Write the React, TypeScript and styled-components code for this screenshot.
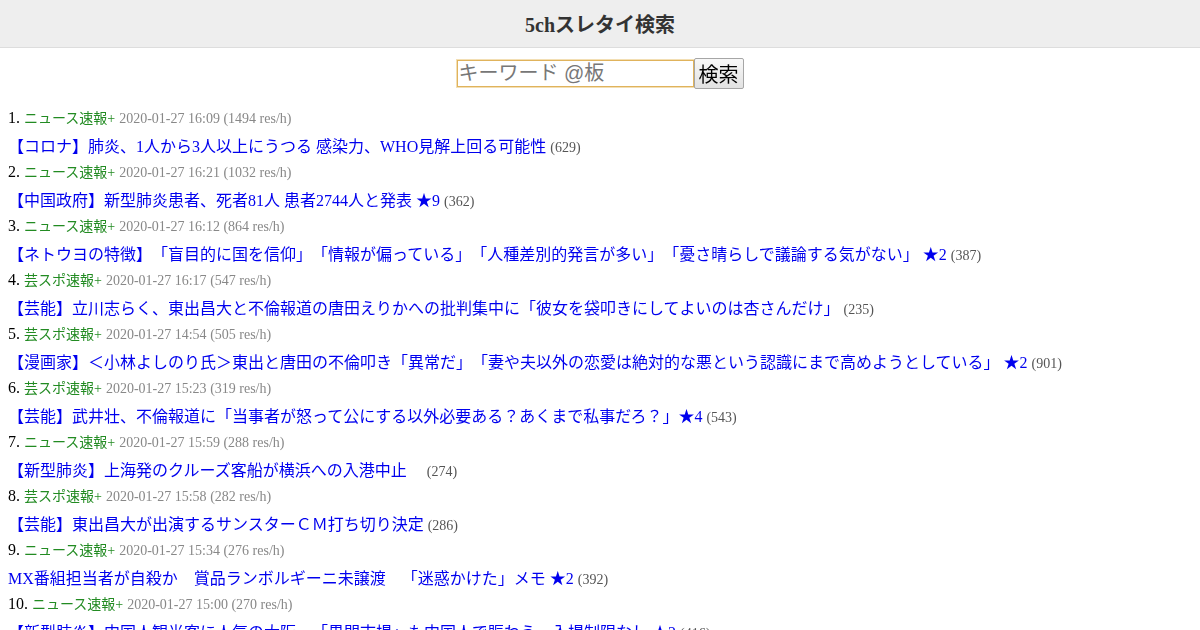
import styled, { createGlobalStyle } from 'styled-components'

const GlobalStyle = createGlobalStyle`
  body {
    margin: 0;
    background: #fff;
    font-family: "Liberation Serif", "Noto Sans CJK JP", serif;
    color: #000;
    text-spacing-trim: space-all;
  }
`

const Header = styled.header`
  height: 47px;
  display: flex;
  align-items: center;
  justify-content: center;

  background-color: #eee;
  border-bottom: 1px solid #ddd;
`

const Title = styled.h1`
  margin: 0;
  font-size: 20px;
  font-weight: bold;
  color: #333;
`

const SearchForm = styled.form`
  display: flex;
  justify-content: center;
  align-items: center;

  padding: 10px 0 15px;
`

const SearchInput = styled.input`
  width: 237px;
  height: 27px;
  box-sizing: border-box;
  padding: 0 1px;

  font-family: "Liberation Sans", "Noto Sans CJK JP", sans-serif;
  font-size: 20px;
  border: 1px solid #e0b35c;
  box-shadow: 0 0 0 1px #f3dfb4;
  outline: none;

  &::placeholder {
    color: #777;
  }
`

const SearchButton = styled.button`
  height: 31px;
  padding: 0 4px;

  font-family: "Liberation Sans", "Noto Sans CJK JP", sans-serif;
  font-size: 20px;
  color: #000;
  background: linear-gradient(#f8f8f8, #e2e2e2);
  border: 1px solid #a6a6a6;
  border-radius: 2px;
`

const List = styled.ol`
  margin: 0;
  padding: 0 8px;
  list-style: none;
`

const Item = styled.li`
  line-height: 27px;
`

const Line = styled.div<{ $offset?: number }>`
  height: ${({ $offset = 0 }) => 27 - $offset}px;
  padding-top: ${({ $offset = 0 }) => $offset}px;
  font-size: 16px;
  white-space: nowrap;

  & > * {
    line-height: 1;
  }
`

const Board = styled.span`
  font-size: 14px;
  color: #228b22;
`

const Info = styled.span`
  font-size: 14px;
  color: #888;
`

const ThreadLink = styled.a`
  font-size: 16px;
  color: #0000ee;
  text-decoration: none;
`

const Count = styled.span`
  font-size: 14px;
  color: #555;
`

type Thread = {
  board: string
  date: string
  speed: number
  title: string
  count: number
}

const threads: Thread[] = [
  { board: 'ニュース速報+', date: '2020-01-27 16:09', speed: 1494, title: '【コロナ】肺炎、1人から3人以上にうつる 感染力、WHO見解上回る可能性', count: 629 },
  { board: 'ニュース速報+', date: '2020-01-27 16:21', speed: 1032, title: '【中国政府】新型肺炎患者、死者81人 患者2744人と発表 ★9', count: 362 },
  { board: 'ニュース速報+', date: '2020-01-27 16:12', speed: 864, title: '【ネトウヨの特徴】「盲目的に国を信仰」「情報が偏っている」「人種差別的発言が多い」「憂さ晴らしで議論する気がない」 ★2', count: 387 },
  { board: '芸スポ速報+', date: '2020-01-27 16:17', speed: 547, title: '【芸能】立川志らく、東出昌大と不倫報道の唐田えりかへの批判集中に「彼女を袋叩きにしてよいのは杏さんだけ」', count: 235 },
  { board: '芸スポ速報+', date: '2020-01-27 14:54', speed: 505, title: '【漫画家】＜小林よしのり氏＞東出と唐田の不倫叩き「異常だ」「妻や夫以外の恋愛は絶対的な悪という認識にまで高めようとしている」 ★2', count: 901 },
  { board: '芸スポ速報+', date: '2020-01-27 15:23', speed: 319, title: '【芸能】武井壮、不倫報道に「当事者が怒って公にする以外必要ある？あくまで私事だろ？」★4', count: 543 },
  { board: 'ニュース速報+', date: '2020-01-27 15:59', speed: 288, title: '【新型肺炎】上海発のクルーズ客船が横浜への入港中止　', count: 274 },
  { board: '芸スポ速報+', date: '2020-01-27 15:58', speed: 282, title: '【芸能】東出昌大が出演するサンスターＣＭ打ち切り決定', count: 286 },
  { board: 'ニュース速報+', date: '2020-01-27 15:34', speed: 276, title: 'MX番組担当者が自殺か　賞品ランボルギーニ未譲渡　「迷惑かけた」メモ ★2', count: 392 },
  { board: 'ニュース速報+', date: '2020-01-27 15:00', speed: 270, title: '【新型肺炎】中国人観光客に人気の大阪　「黒門市場」も中国人で賑わう　入場制限なし ★2', count: 416 },
]

const App = () => (
  <>
    <GlobalStyle />
    <Header>
      <Title>5chスレタイ検索</Title>
    </Header>
    <SearchForm onSubmit={(e) => e.preventDefault()}>
      <SearchInput type="text" placeholder="キーワード @板" autoFocus />
      <SearchButton type="submit">検索</SearchButton>
    </SearchForm>
    <List>
      {threads.map((thread, i) => (
        <Item key={i}>
          <Line>
            {i + 1}. <Board>{thread.board}</Board>{' '}
            <Info>
              {thread.date} ({thread.speed} res/h)
            </Info>
          </Line>
          <Line $offset={2}>
            <ThreadLink href="#">{thread.title}</ThreadLink>{' '}
            <Count>({thread.count})</Count>
          </Line>
        </Item>
      ))}
    </List>
  </>
)

export default App
